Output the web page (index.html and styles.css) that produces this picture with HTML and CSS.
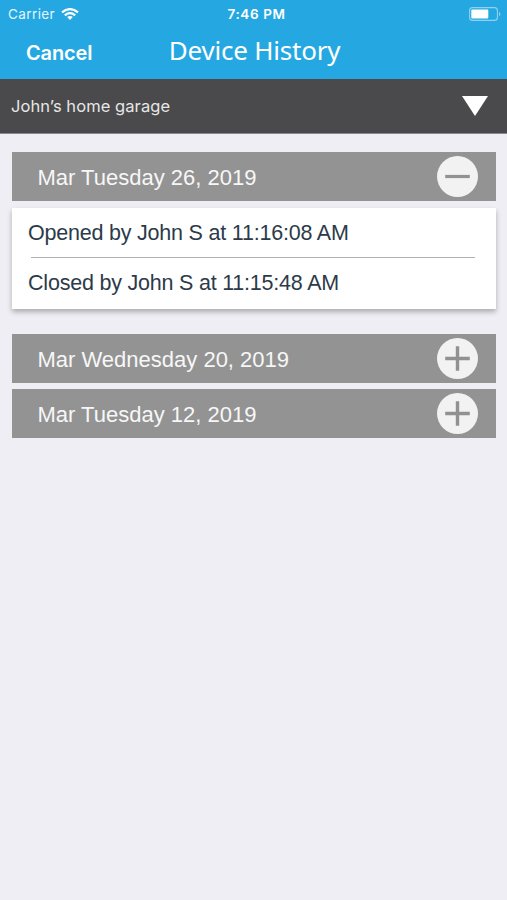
FILE: index.html
```html
<!DOCTYPE html>
<html lang="en">
<head>
<meta charset="utf-8">
<title>Device History</title>
<link rel="stylesheet" href="styles.css">
</head>
<body>
<header class="top">
  <div class="status">
    <div class="carrier"><span class="carrier-name">Carrier</span>
      <svg class="wifi" viewBox="0 0 18 12" width="18" height="12"><g fill="none" stroke="#fff" stroke-width="2.1"><path d="M1 4.4Q9-2.3 17 4.4"/><path d="M3.8 7.4Q9 3 14.2 7.4"/></g><path d="M6.2 9.1Q9 6.8 11.8 9.1L9 12Z" fill="#fff"/></svg>
    </div>
    <div class="clock"><span>7:46 PM</span></div>
    <svg class="battery" viewBox="0 0 32 14" width="32" height="14"><rect x=".6" y=".6" width="27.8" height="12.8" rx="3" fill="none" stroke="#8fd2f1" stroke-width="1.1"/><rect x="2.3" y="2.5" width="17" height="9" rx="1" fill="#fff"/><path d="M30 4.7Q32.8 7 30 9.3Z" fill="#8fd2f1"/></svg>
  </div>
  <nav class="nav">
    <span class="cancel">Cancel</span>
    <h1 class="title">Device History</h1>
  </nav>
</header>
<div class="device">
  <span class="device-name">John’s home garage</span>
  <svg width="26" height="20" viewBox="0 0 26 20"><path d="M0 0H26L13 20Z" fill="#fff"/></svg>
</div>
<main class="history">
  <section class="day open">
    <div class="bar"><span class="date">Mar Tuesday 26, 2019</span>
      <svg class="toggle" viewBox="0 0 41 41"><circle cx="20.5" cy="20.5" r="20.5" fill="#f2f2f2"/><path d="M8.2 20.5H32.8" stroke="#919191" stroke-width="3.2"/></svg>
    </div>
    <div class="panel">
      <div class="entry"><span>Opened by John S at 11:16:08 AM</span></div>
      <div class="rule"></div>
      <div class="entry"><span>Closed by John S at 11:15:48 AM</span></div>
    </div>
  </section>
  <section class="day">
    <div class="bar"><span class="date">Mar Wednesday 20, 2019</span>
      <svg class="toggle" viewBox="0 0 41 41"><circle cx="20.5" cy="20.5" r="20.5" fill="#f2f2f2"/><path d="M8.2 20.5H32.8M20.5 8.2V32.8" stroke="#919191" stroke-width="3.4"/></svg>
    </div>
  </section>
  <section class="day">
    <div class="bar"><span class="date">Mar Tuesday 12, 2019</span>
      <svg class="toggle" viewBox="0 0 41 41"><circle cx="20.5" cy="20.5" r="20.5" fill="#f2f2f2"/><path d="M8.2 20.5H32.8M20.5 8.2V32.8" stroke="#919191" stroke-width="3.4"/></svg>
    </div>
  </section>
</main>
</body>
</html>
```
FILE: styles.css
```css
* { box-sizing: border-box; }
body { margin: 0; min-height: 900px; background: #efeef4; font-family: "Liberation Sans", sans-serif; }
svg { display: block; flex: none; }
.top { height: 79px; background: #25a8e2; color: #fff; }
.status { height: 27px; display: grid; grid-template-columns: 1fr auto 1fr; align-items: center; padding: 0 6px 0 8px; font-family: Inter, sans-serif; font-size: 13.5px; }
.carrier { display: flex; align-items: center; gap: 6px; color: #e4f5fc; letter-spacing: .4px; }
.clock { padding-left: 4px; font-weight: 600; letter-spacing: .6px; }
.battery { justify-self: end; }
.nav { height: 52px; display: grid; grid-template-columns: 1fr auto 1fr; align-items: center; padding: 0 25px 0 26px; }
.cancel { font: 600 20px/24px Inter, sans-serif; letter-spacing: -.15px; }
.title { margin: 0; padding: 0 0 6px 1px; font: 400 26px/36px "Noto Sans", sans-serif; letter-spacing: -.2px; }
.device { height: 55px; background: #4a494b; border-bottom: 1px solid #8a898c; color: #e6e6e6; display: flex; align-items: center; justify-content: space-between; padding: 0 19.5px 0 11px; font: 400 16.5px/20px Inter, sans-serif; letter-spacing: .07px; }
.history { padding: 18.4px 11.5px 0 12px; }
.day { margin-bottom: 6.3px; }
.open { margin-bottom: 25.3px; }
.bar { height: 48.8px; background: #939393; color: #f7f7f7; display: flex; align-items: center; justify-content: space-between; padding: 0 17.5px 0 25.5px; font-size: 22px; }
.date { padding-top: 2px; }
.toggle { width: 41px; height: 41px; }
.panel { margin-top: 6.7px; height: 101.2px; background: #fff; color: #2c3a49; box-shadow: 0 3px 5px rgba(0,0,0,.28); font-size: 21.5px; letter-spacing: -.21px; }
.entry { height: 49px; display: flex; align-items: center; padding: 2px 0 0 16px; }
.rule { height: 1px; margin: 0 21px 0 19px; background: #b0b2b2; }
```
